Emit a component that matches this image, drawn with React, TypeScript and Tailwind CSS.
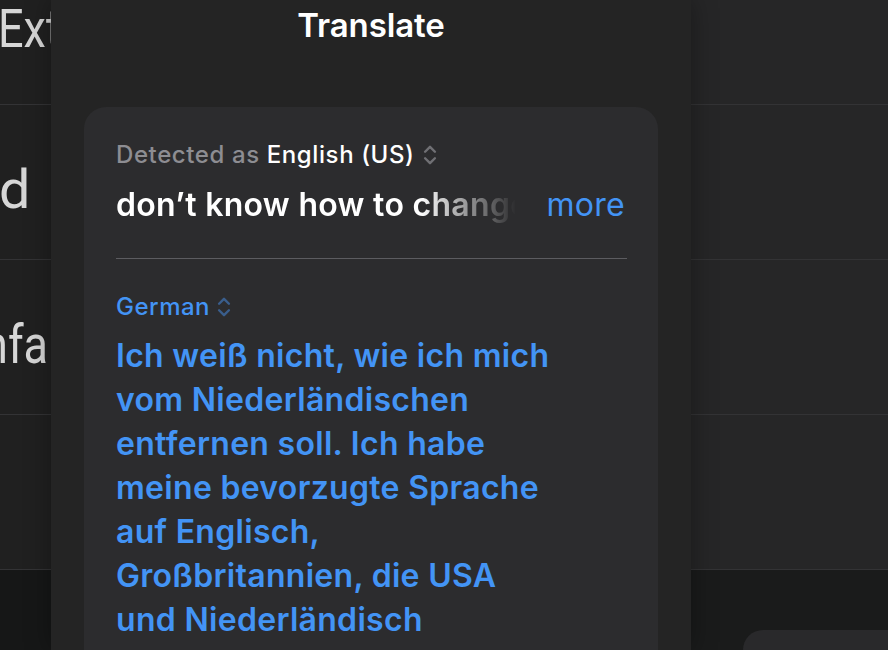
import { type FC } from "react";

const germanLines = [
  "Ich weiß nicht, wie ich mich",
  "vom Niederländischen",
  "entfernen soll. Ich habe",
  "meine bevorzugte Sprache",
  "auf Englisch,",
  "Großbritannien, die USA",
  "und Niederländisch",
];

const UpDown: FC<{ className?: string }> = ({ className }) => (
  <svg viewBox="0 0 14 22" className={className} fill="none" stroke="currentColor" strokeWidth={2.2} strokeLinecap="round" strokeLinejoin="round">
    <path d="M2.5 8 L7 3.5 L11.5 8" />
    <path d="M2.5 14 L7 18.5 L11.5 14" />
  </svg>
);

// rows of the settings list that sits behind the sheet
const BackdropRows: FC<{ labels: { text: string; offset: string }[] }> = ({ labels }) => (
  <div className="flex flex-col">
    {labels.map((label, i) => (
      <div
        key={i}
        className={`flex items-end overflow-hidden whitespace-nowrap border-b border-[#333335] ${
          i === 0 ? "h-[105px] pb-[1px]" : "h-[155px] pb-[0px]"
        }`}
      >
        {label.text && (
          <span
            className={`h-[62px] shrink-0 origin-left text-[53px] leading-[62px] font-normal text-[#d6d6d6] font-['Roboto',sans-serif] ${label.offset}`}
          >
            {label.text}
          </span>
        )}
      </div>
    ))}
  </div>
);

export default function App() {
  return (
    <div className="flex h-[650px] w-[888px] overflow-hidden bg-[#1f1f1f] font-['Inter','Noto_Sans',sans-serif] antialiased">
      {/* Left sliver of the list underneath */}
      <aside className="flex w-[51px] shrink-0 flex-col overflow-hidden bg-[#202020]">
        <BackdropRows
          labels={[
            { text: "Ext", offset: "-ml-[2px] mb-[43px] scale-x-[0.85]" },
            { text: "d", offset: "-ml-[1px] mb-[38px] scale-x-[1.05]" },
            { text: "nfa", offset: "-ml-[17px] mb-[38px] scale-x-[0.85]" },
            { text: "", offset: "" },
          ]}
        />
        <div className="flex-1 bg-[#161717]" />
      </aside>

      {/* Translate sheet */}
      <main className="relative z-10 flex w-[640px] shrink-0 flex-col items-center bg-[#242424] shadow-[0_0_24px_rgba(0,0,0,0.35)]">
        <h1 className="pt-[5px] text-[33px] leading-[40px] font-semibold tracking-[-0.1px] text-white">Translate</h1>

        <section className="mt-[62px] w-[574px] flex-1 rounded-t-[22px] bg-[#2c2c2e] pl-[32px] pr-[31px] pt-[34px]">
          <div className="flex items-center text-[24px] leading-[28px] tracking-[0.6px]">
            <span className="font-medium text-[#8d8d92]">Detected as</span>
            <span className="ml-[7px] font-medium text-white">English (US)</span>
            <UpDown className="ml-[7px] h-[24px] w-[16px] text-[#707074]" />
          </div>

          <div className="mt-[17px] flex items-center text-[32px] leading-[38px] tracking-[0.3px]">
            <span className="w-[400px] overflow-hidden whitespace-nowrap font-semibold text-white [mask-image:linear-gradient(to_right,black_76%,transparent_100%)]">
              don’t know how to change my preferred language
            </span>
            <span className="ml-auto pr-[2px] font-normal text-[#4394f5]">more</span>
          </div>

          <div className="mt-[34px] h-px bg-[#5c5c60]" />

          <div className="mt-[34px] flex items-center text-[24px] leading-[28px] tracking-[0.5px]">
            <span className="font-medium text-[#4394f5]">German</span>
            <UpDown className="ml-[6px] h-[24px] w-[16px] text-[#3a5e8c]" />
          </div>

          <p className="mt-[13px] text-[32px] leading-[44px] font-semibold tracking-[0.3px] text-[#4394f5]">
            {germanLines.map((line) => (
              <span key={line} className="block whitespace-nowrap">
                {line}
              </span>
            ))}
          </p>
        </section>
      </main>

      {/* Right part of the list underneath */}
      <aside className="relative flex flex-1 flex-col bg-[#262627]">
        <BackdropRows labels={[{ text: "", offset: "" }, { text: "", offset: "" }, { text: "", offset: "" }, { text: "", offset: "" }]} />
        <div className="flex flex-1 items-end bg-[#1a1b1b] pl-[52px]">
          <div className="h-[20px] w-full rounded-tl-[34px] bg-[#29292b]" />
        </div>
      </aside>
    </div>
  );
}
